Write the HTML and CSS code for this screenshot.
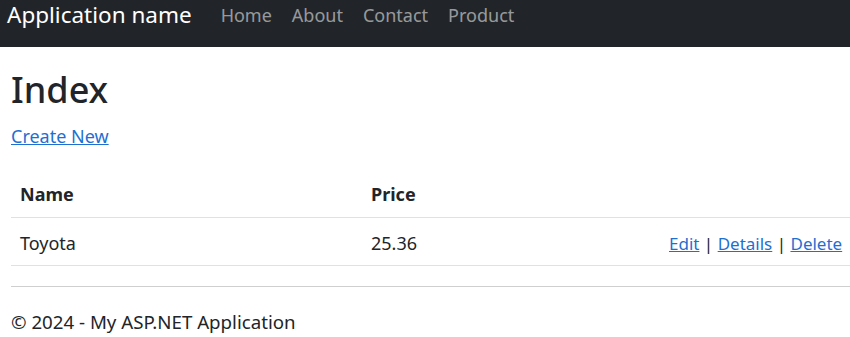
FILE: index.html
```html
<!DOCTYPE html>
<html>
<head>
<meta charset="utf-8">
<title>Index</title>
<link rel="stylesheet" href="styles.css">
</head>
<body>
<header class="navbar">
  <a class="brand" href="#">Application name</a>
  <nav class="nav">
    <a href="#">Home</a>
    <a href="#">About</a>
    <a href="#">Contact</a>
    <a href="#">Product</a>
  </nav>
</header>
<main class="content">
  <h1 class="title">Index</h1>
  <p class="create"><a href="#">Create New</a></p>
  <table class="grid">
    <thead>
      <tr><th class="c-name">Name</th><th class="c-price">Price</th><th class="c-act"></th></tr>
    </thead>
    <tbody>
      <tr><td>Toyota</td><td>25.36</td><td class="c-act"><a href="#">Edit</a> | <a href="#">Details</a> | <a href="#">Delete</a></td></tr>
    </tbody>
  </table>
  <hr class="rule">
  <footer class="footer">© 2024 - My ASP.NET Application</footer>
</main>
</body>
</html>
```
FILE: styles.css
```css
* { box-sizing: border-box; }
html, body { margin: 0; padding: 0; }
body {
  font-family: "Noto Sans", "Open Sans", sans-serif;
  font-size: 18px;
  line-height: 27px;
  color: #212529;
  background: #fff;
  width: 850px;
  overflow: hidden;
}
a { color: #1f6fd1; }
.navbar {
  height: 47px;
  background: #212529;
  display: flex;
  align-items: flex-start;
  padding: 0 0 0 7px;
}
.brand {
  color: #fff;
  text-decoration: none;
  font-size: 22.5px;
  line-height: 30px;
  margin-right: 29px;
}
.nav { display: flex; gap: 20px; margin-top: 1.5px; }
.nav a {
  color: rgba(255,255,255,.55);
  text-decoration: none;
  font-size: 18px;
  line-height: 27px;
}
.content { padding: 0 0 0 11px; }
.title {
  font-size: 36px;
  font-weight: 500;
  margin: 21px 0 12px;
  line-height: 43px;
}
.create { margin: 0 0 18px; }
.grid {
  width: 840px;
  border-collapse: collapse;
}
.grid th, .grid td {
  text-align: left;
  padding: 12px 8px 8px 9px;
  border-bottom: 1px solid #dee2e6;
}
.grid th { font-weight: 700; padding-top: 13px; padding-bottom: 9px; }
.c-name { width: 351px; }
.c-price { width: 299px; }
.grid td.c-act { font-size: 17px; padding-left: 8px; }
.rule {
  border: 0;
  border-top: 1px solid #cfcfcf;
  margin: 20px 0 21px;
}
.footer { font-size: 18.7px; line-height: 28px; padding-bottom: 8px; }
```
